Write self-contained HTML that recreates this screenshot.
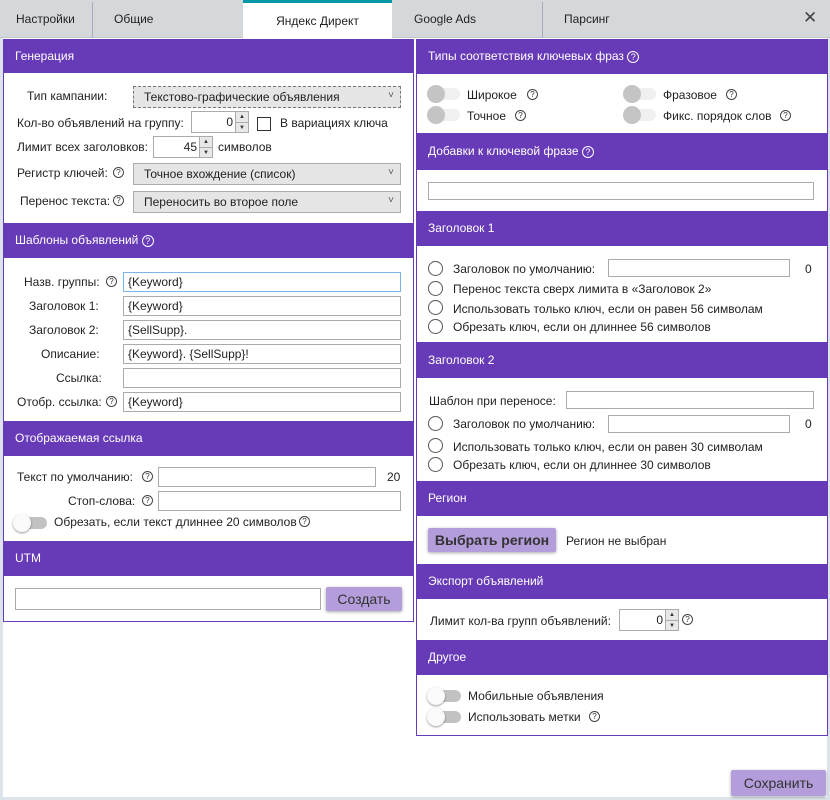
<!DOCTYPE html>
<html><head><meta charset="utf-8"><style>
*{box-sizing:border-box;margin:0;padding:0}
body{width:830px;height:800px;background:#fff;font-family:"Liberation Sans","DejaVu Sans",sans-serif;font-size:12px;color:#222;position:relative;overflow:hidden}
.a{position:absolute;white-space:nowrap}
.tabbar{position:absolute;left:0;top:0;width:830px;height:38px;background:#d4d8da;border-bottom:1px solid #c4c8ca}
.tab{position:absolute;top:0;height:38px;line-height:38px;font-size:12px;color:#222}
.sep{position:absolute;top:2px;width:1px;height:36px;background:#aab}
.panel{position:absolute;border:1px solid #673ab7;background:#fff}
.hd{position:absolute;background:#673ab7;color:#fff;font-size:12px;padding-left:12px}
.inp{position:absolute;border:1px solid #ababab;background:#fff;height:20px;line-height:18px;padding-left:4px;font-size:12px}
.sel{position:absolute;border:1px solid #acacac;background:#e5e5e5;height:22px;line-height:20px;padding-left:10px}
.sel:after{content:"˅";position:absolute;right:6px;top:-1px;font-size:10px;color:#555}
.q{position:absolute;width:11px;height:11px;border:1px solid #444;border-radius:50%;font-size:8px;line-height:9px;text-align:center;color:#333}
.spin{position:absolute;height:22px;border:1px solid #ababab;background:#fff}
.spin .v{position:absolute;right:15px;top:0;line-height:20px}
.spin .up,.spin .dn{position:absolute;right:0;width:13px;height:10px;background:#e8e8e8;border-left:1px solid #ababab;font-size:6px;text-align:center;line-height:10px;color:#333}
.spin .up{top:0}.spin .dn{bottom:0;border-top:1px solid #ababab}
.tg{position:absolute;width:32px;height:12px;border-radius:6px;background:#f0f0f0}
.tg:before{content:"";position:absolute;left:-1px;top:-3px;width:18px;height:18px;border-radius:50%;background:#c4c4c4}
.tw{position:absolute;width:32px;height:12px;border-radius:6px;background:#c2c2c2}
.tw:before{content:"";position:absolute;left:-2px;top:-3px;width:18px;height:18px;border-radius:50%;background:#fafafa;box-shadow:0 1px 2px rgba(0,0,0,.4)}
.rd{position:absolute;width:15px;height:15px;border:1.5px solid #555;border-radius:50%}
.btn{position:absolute;background:#b39ddb;color:#333;font-size:14px;text-align:center;box-shadow:0 1px 3px rgba(0,0,0,.35);border-radius:2px}
</style></head><body>
<div class="tabbar"></div>
<div class="tab" style="left:16px">Настройки</div>
<div class="sep" style="left:92px"></div>
<div class="tab" style="left:114px">Общие</div>
<div class="a" style="left:243px;top:0;width:149px;height:39px;background:#fff;border-top:3px solid #0097a7;text-align:center;line-height:36px">Яндекс Директ</div>
<div class="tab" style="left:414px">Google Ads</div>
<div class="sep" style="left:542px"></div>
<div class="tab" style="left:564px">Парсинг</div>
<div class="a" style="left:803px;top:8px;font-size:17px;font-weight:bold;color:#444">✕</div>
<div class="a" style="left:0;top:38px;width:3px;height:762px;background:#dde3ea"></div>
<div class="a" style="left:827px;top:38px;width:3px;height:762px;background:#dde3ea"></div>
<div class="a" style="left:0;top:797px;width:830px;height:3px;background:#dde3ea"></div>

<!-- LEFT -->
<div class="panel" style="left:3px;top:39px;width:411px;height:583px"></div>
<div class="hd" style="left:3px;top:39px;width:411px;height:34px;line-height:34px">Генерация</div>
<div class="a" style="left:27px;top:89px">Тип кампании:</div>
<div class="sel" style="left:133px;top:86px;width:268px;border:1px dashed #777;line-height:20px">Текстово-графические объявления</div>
<div class="a" style="left:17px;top:116px">Кол-во объявлений на группу:</div>
<div class="spin" style="left:191px;top:111px;width:58px"><span class="v">0</span><div class="up">▲</div><div class="dn">▼</div></div>
<div class="a" style="left:257px;top:117px;width:14px;height:14px;border:1px solid #333"></div>
<div class="a" style="left:280px;top:116px">В вариациях ключа</div>
<div class="a" style="left:17px;top:140px">Лимит всех заголовков:</div>
<div class="spin" style="left:153px;top:136px;width:60px"><span class="v">45</span><div class="up">▲</div><div class="dn">▼</div></div>
<div class="a" style="left:218px;top:140px">символов</div>
<div class="a" style="left:17px;top:166px">Регистр ключей:</div><div class="q" style="left:113px;top:167px">?</div>
<div class="sel" style="left:133px;top:163px;width:268px">Точное вхождение (список)</div>
<div class="a" style="left:20px;top:194px">Перенос текста:</div><div class="q" style="left:113px;top:195px">?</div>
<div class="sel" style="left:133px;top:191px;width:268px">Переносить во второе поле</div>

<div class="hd" style="left:3px;top:223px;width:411px;height:35px;line-height:35px">Шаблоны объявлений <span style="display:inline-block;width:12px;height:12px;border:1px solid #fff;border-radius:50%;font-size:9px;line-height:10px;text-align:center">?</span></div>
<div class="a" style="left:24px;top:275px">Назв. группы:</div><div class="q" style="left:106px;top:276px">?</div>
<div class="inp" style="left:123px;top:272px;width:278px;border-color:#7eb4ea">{Keyword}</div>
<div class="a" style="left:29px;top:299px">Заголовок 1:</div>
<div class="inp" style="left:123px;top:296px;width:278px">{Keyword}</div>
<div class="a" style="left:29px;top:323px">Заголовок 2:</div>
<div class="inp" style="left:123px;top:320px;width:278px">{SellSupp}.</div>
<div class="a" style="left:41px;top:347px">Описание:</div>
<div class="inp" style="left:123px;top:344px;width:278px">{Keyword}. {SellSupp}!</div>
<div class="a" style="left:56px;top:371px">Ссылка:</div>
<div class="inp" style="left:123px;top:368px;width:278px"></div>
<div class="a" style="left:17px;top:395px">Отобр. ссылка:</div><div class="q" style="left:106px;top:396px">?</div>
<div class="inp" style="left:123px;top:392px;width:278px">{Keyword}</div>

<div class="hd" style="left:3px;top:421px;width:411px;height:35px;line-height:35px">Отображаемая ссылка</div>
<div class="a" style="left:17px;top:470px">Текст по умолчанию:</div><div class="q" style="left:142px;top:471px">?</div>
<div class="inp" style="left:158px;top:467px;width:218px"></div>
<div class="a" style="left:387px;top:470px">20</div>
<div class="a" style="left:68px;top:494px">Стоп-слова:</div><div class="q" style="left:142px;top:495px">?</div>
<div class="inp" style="left:158px;top:491px;width:243px"></div>
<div class="tw" style="left:15px;top:517px"></div>
<div class="a" style="left:54px;top:515px">Обрезать, если текст длиннее 20 символов</div><div class="q" style="left:299px;top:516px">?</div>

<div class="hd" style="left:3px;top:541px;width:411px;height:35px;line-height:35px">UTM</div>
<div class="inp" style="left:15px;top:588px;width:306px;height:22px"></div>
<div class="btn" style="left:326px;top:587px;width:76px;height:24px;line-height:24px">Создать</div>

<!-- RIGHT -->
<div class="panel" style="left:416px;top:39px;width:412px;height:697px"></div>
<div class="hd" style="left:416px;top:39px;width:412px;height:35px;line-height:35px">Типы соответствия ключевых фраз <span style="display:inline-block;width:12px;height:12px;border:1px solid #fff;border-radius:50%;font-size:9px;line-height:10px;text-align:center">?</span></div>
<div class="tg" style="left:428px;top:88px"></div><div class="a" style="left:467px;top:88px">Широкое</div><div class="q" style="left:527px;top:89px">?</div>
<div class="tg" style="left:624px;top:88px"></div><div class="a" style="left:663px;top:88px">Фразовое</div><div class="q" style="left:726px;top:89px">?</div>
<div class="tg" style="left:428px;top:109px"></div><div class="a" style="left:467px;top:109px">Точное</div><div class="q" style="left:515px;top:110px">?</div>
<div class="tg" style="left:624px;top:109px"></div><div class="a" style="left:663px;top:109px">Фикс. порядок слов</div><div class="q" style="left:780px;top:110px">?</div>

<div class="hd" style="left:416px;top:133px;width:412px;height:37px;line-height:37px">Добавки к ключевой фразе <span style="display:inline-block;width:12px;height:12px;border:1px solid #fff;border-radius:50%;font-size:9px;line-height:10px;text-align:center">?</span></div>
<div class="inp" style="left:428px;top:182px;width:386px;height:18px"></div>

<div class="hd" style="left:416px;top:211px;width:412px;height:35px;line-height:35px">Заголовок 1</div>
<div class="rd" style="left:428px;top:261px"></div><div class="a" style="left:453px;top:262px">Заголовок по умолчанию:</div>
<div class="inp" style="left:608px;top:259px;width:182px;height:18px"></div><div class="a" style="left:805px;top:262px">0</div>
<div class="rd" style="left:428px;top:281px"></div><div class="a" style="left:453px;top:282px">Перенос текста сверх лимита в «Заголовок 2»</div>
<div class="rd" style="left:428px;top:300px"></div><div class="a" style="left:453px;top:302px">Использовать только ключ, если он равен 56 символам</div>
<div class="rd" style="left:428px;top:319px"></div><div class="a" style="left:453px;top:320px">Обрезать ключ, если он длиннее 56 символов</div>

<div class="hd" style="left:416px;top:342px;width:412px;height:36px;line-height:36px">Заголовок 2</div>
<div class="a" style="left:429px;top:394px">Шаблон при переносе:</div>
<div class="inp" style="left:566px;top:391px;width:248px;height:18px"></div>
<div class="rd" style="left:428px;top:416px"></div><div class="a" style="left:453px;top:417px">Заголовок по умолчанию:</div>
<div class="inp" style="left:608px;top:415px;width:182px;height:18px"></div><div class="a" style="left:805px;top:417px">0</div>
<div class="rd" style="left:428px;top:438px"></div><div class="a" style="left:453px;top:440px">Использовать только ключ, если он равен 30 символам</div>
<div class="rd" style="left:428px;top:457px"></div><div class="a" style="left:453px;top:458px">Обрезать ключ, если он длиннее 30 символов</div>

<div class="hd" style="left:416px;top:481px;width:412px;height:35px;line-height:35px">Регион</div>
<div class="btn" style="left:428px;top:528px;width:128px;height:24px;line-height:24px;font-weight:bold">Выбрать регион</div>
<div class="a" style="left:566px;top:534px">Регион не выбран</div>

<div class="hd" style="left:416px;top:564px;width:412px;height:35px;line-height:35px">Экспорт объявлений</div>
<div class="a" style="left:430px;top:614px">Лимит кол-ва групп объявлений:</div>
<div class="spin" style="left:619px;top:609px;width:60px"><span class="v">0</span><div class="up">▲</div><div class="dn">▼</div></div>
<div class="q" style="left:682px;top:614px">?</div>

<div class="hd" style="left:416px;top:640px;width:412px;height:35px;line-height:35px">Другое</div>
<div class="tw" style="left:429px;top:690px"></div><div class="a" style="left:468px;top:689px">Мобильные объявления</div>
<div class="tw" style="left:429px;top:711px"></div><div class="a" style="left:468px;top:710px">Использовать метки</div><div class="q" style="left:589px;top:711px">?</div>

<div class="btn" style="left:731px;top:770px;width:95px;height:26px;line-height:26px">Сохранить</div>
</body></html>
